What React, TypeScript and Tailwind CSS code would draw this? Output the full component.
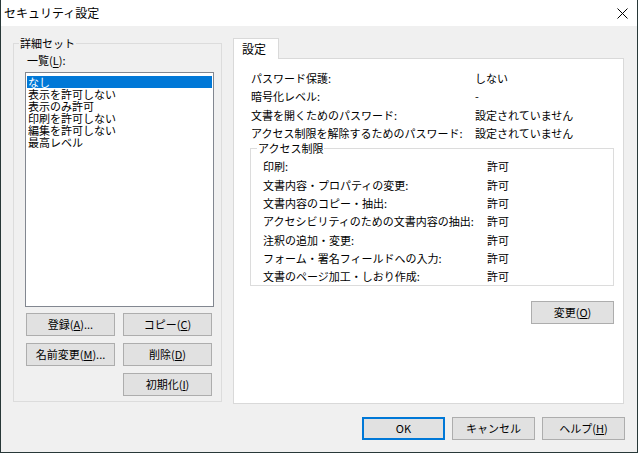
import React from "react";

const presets = ["なし", "表示を許可しない", "表示のみ許可", "印刷を許可しない", "編集を許可しない", "最高レベル"];

const summary: [string, string][] = [
  ["パスワード保護:", "しない"],
  ["暗号化レベル:", "-"],
  ["文書を開くためのパスワード:", "設定されていません"],
  ["アクセス制限を解除するためのパスワード:", "設定されていません"],
];

const access: [string, string][] = [
  ["印刷:", "許可"],
  ["文書内容・プロパティの変更:", "許可"],
  ["文書内容のコピー・抽出:", "許可"],
  ["アクセシビリティのための文書内容の抽出:", "許可"],
  ["注釈の追加・変更:", "許可"],
  ["フォーム・署名フィールドへの入力:", "許可"],
  ["文書のページ加工・しおり作成:", "許可"],
];

function Btn({ children, primary, className = "" }: { children: React.ReactNode; primary?: boolean; className?: string }) {
  return (
    <button
      className={`h-[23px] bg-[#e1e1e1] flex items-center justify-center text-[11px] leading-none text-black ${
        primary ? "border-2 border-[#0078d7]" : "border border-[#adadad]"
      } ${className}`}
    >
      {children}
    </button>
  );
}

export default function App() {
  return (
    <div
      className="w-[638px] h-[453px] bg-[#f0f0f0] border-x border-b border-[#283838] flex flex-col text-black overflow-hidden"
      style={{ fontFamily: '"Noto Sans CJK JP", "Meiryo UI", sans-serif' }}
    >
      {/* title bar */}
      <div className="h-[26px] bg-white flex items-center justify-between pl-[3px] pr-[9px] shrink-0">
        <span className="text-[12px] leading-none">セキュリティ設定</span>
        <svg width="11" height="11" viewBox="0 0 11 11" className="mt-[1px]">
          <path d="M0.5 0.5 L10.5 10.5 M10.5 0.5 L0.5 10.5" stroke="#000" strokeWidth="1" fill="none" />
        </svg>
      </div>

      <div className="flex-1 flex flex-col pt-[12px]">
        <div className="flex h-[366px]">
          {/* 詳細セット */}
          <div className="relative ml-[12px] mt-[5px] w-[209px] h-[359px] border border-[#dcdcdc] pl-[11px] pt-[9px]">
            <span className="absolute -top-[8px] left-[5px] bg-[#f0f0f0] px-[1px] text-[11px] leading-[14px]">詳細セット</span>
            <div className="ml-[2px] text-[11px] leading-[14px]">
              一覧(<u className="underline-offset-2">L</u>):
            </div>
            <div className="mt-[5px] w-[189px] h-[235px] border border-[#828790] bg-white px-[1px] pt-[3px]">
              {presets.map((p, i) => (
                <div
                  key={p}
                  className={`h-[12px] leading-[12px] text-[11px] pl-[1px] whitespace-nowrap ${
                    i === 0 ? "bg-[#0078d7] text-white" : ""
                  }`}
                >
                  {p}
                </div>
              ))}
            </div>
            <div className="mt-[6px] ml-[1px] grid grid-cols-[89px_89px] gap-x-[8px] gap-y-[7px]">
              <Btn>
                登録(<u>A</u>)...
              </Btn>
              <Btn>
                コピー(<u>C</u>)
              </Btn>
              <Btn>
                名前変更(<u>M</u>)...
              </Btn>
              <Btn>
                削除(<u>D</u>)
              </Btn>
              <Btn className="col-start-2">
                初期化(<u>I</u>)
              </Btn>
            </div>
          </div>

          {/* 設定 tab */}
          <div className="ml-[11px] w-[391px] flex flex-col">
            <div className="relative z-10 -mb-[1px] w-[46px] h-[21px] bg-white border-x border-t border-[#d9d9d9] pl-[8px] text-[12px] leading-[20px]">
              設定
            </div>
            <div className="flex-1 bg-white border border-[#d9d9d9] pl-[16px] pr-[9px] pt-[10px] flex flex-col">
              <div className="pl-[1px] grid grid-cols-[224px_1fr] text-[11px] leading-[18.33px] whitespace-nowrap">
                {summary.map(([k, v]) => (
                  <React.Fragment key={k}>
                    <span>{k}</span>
                    <span>{v}</span>
                  </React.Fragment>
                ))}
              </div>
              <div className="relative mt-[6px] h-[138px] border border-[#dcdcdc] pl-[12px] pt-[8px]">
                <span className="absolute -top-[8px] left-[6px] bg-white px-[1px] text-[11px] leading-[14px]">アクセス制限</span>
                <div className="grid grid-cols-[224px_1fr] text-[11px] leading-[18.33px] whitespace-nowrap">
                  {access.map(([k, v]) => (
                    <React.Fragment key={k}>
                      <span>{k}</span>
                      <span>{v}</span>
                    </React.Fragment>
                  ))}
                </div>
              </div>
              <div className="mt-[15px] flex justify-end">
                <Btn className="w-[83px]">
                  変更(<u>O</u>)
                </Btn>
              </div>
            </div>
          </div>
        </div>

        <div className="mt-[13px] flex justify-end gap-[7px] pr-[12px]">
          <Btn primary className="w-[83px]">
            OK
          </Btn>
          <Btn className="w-[83px]">キャンセル</Btn>
          <Btn className="w-[83px]">
            ヘルプ(<u>H</u>)
          </Btn>
        </div>
      </div>
    </div>
  );
}
